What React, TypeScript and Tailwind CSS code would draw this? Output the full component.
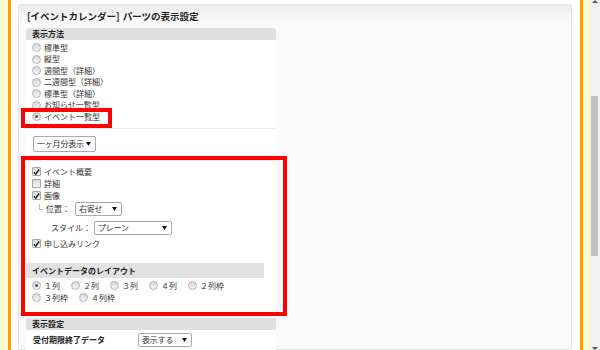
import React from 'react';

const Radio: React.FC<{ checked?: boolean }> = ({ checked }) => (
  <span className="flex h-[9px] w-[9px] shrink-0 items-center justify-center rounded-full border border-[#b2b2b2] bg-[linear-gradient(#d6d6d6,#f6f6f6)]">
    {checked && <span className="h-[3px] w-[3px] rounded-full bg-[#555]" />}
  </span>
);

const Check: React.FC<{ checked?: boolean }> = ({ checked }) => (
  <span className="flex h-[9px] w-[9px] shrink-0 items-center justify-center rounded-[1px] border border-[#a5a5a5] bg-[linear-gradient(#d8d8d8,#f6f6f6)]">
    {checked && (
      <svg width="8" height="8" viewBox="0 0 8 8">
        <path d="M1 4.2 L3.2 6.4 L7 1.2" fill="none" stroke="#222" strokeWidth="1.7" />
      </svg>
    )}
  </span>
);

const Select: React.FC<{ label: string; width: string; height?: string }> = ({ label, width, height = 'h-[14px]' }) => (
  <div className={`flex ${width} ${height} items-center justify-between rounded-[2px] border border-[#aaa] bg-white pl-[3px] pr-[4px]`}>
    <span className="tracking-[-0.2px]">{label}</span>
    <svg width="5" height="4" viewBox="0 0 5 4" className="shrink-0">
      <path d="M0 0 H5 L2.5 4 Z" fill="#111" />
    </svg>
  </div>
);

const RadioRow: React.FC<{ label: string; checked?: boolean }> = ({ label, checked }) => (
  <div className="flex h-[11.5px] items-center gap-[3px]">
    <Radio checked={checked} />
    <span>{label}</span>
  </div>
);

const CheckRow: React.FC<{ label: string; checked?: boolean }> = ({ label, checked }) => (
  <div className="flex h-[12px] items-center gap-[3px]">
    <Check checked={checked} />
    <span>{label}</span>
  </div>
);

const LayoutOption: React.FC<{ label: string; checked?: boolean }> = ({ label, checked }) => (
  <div className="mr-[11px] flex items-center gap-[3px]">
    <Radio checked={checked} />
    <span>{label}</span>
  </div>
);

const displayTypes = ['標準型', '縦型', '週間型（詳細）', '二週間型（詳細）', '標準型（詳細）', 'お知らせ一覧型', 'イベント一覧型'];

const App: React.FC = () => {
  return (
    <div className="relative flex h-[350px] w-[600px] overflow-hidden bg-white font-['Noto_Sans_CJK_JP',sans-serif] text-[8px] text-[#333]">
      <div className="w-[8px] bg-[#fffbd0]" />
      <div className="w-[3px] bg-[#ff9a00]" />

      <div className="flex-1 pl-[7px] pr-[8px] pt-[4px]">
        <div className="h-full rounded-t-[3px] border border-[#e4e4e4] bg-[linear-gradient(#ebebeb,#fafafa_16px)] pl-[7px]">
          <h1 className="flex h-[23px] items-center gap-[3px] pl-[1px] text-[9.5px] font-bold text-[#222]">
            <span>[イベントカレンダー]</span>
            <span>パーツの表示設定</span>
          </h1>

          <div className="w-[250px] bg-white">
            <div className="h-[12px] rounded-t-[3px] bg-[#e0e0e0] px-[6px] font-bold leading-[12px] text-[#222]">表示方法</div>

            <div className="border-b border-[#ececec] px-[6px] pb-[5px] pt-[2px]">
              {displayTypes.map((t) => (
                <RadioRow key={t} label={t} checked={t === 'イベント一覧型'} />
              ))}
            </div>

            <div className="border-b border-[#ececec] px-[7px] pb-[8px] pt-[7px]">
              <Select label="一ヶ月分表示" width="w-[63px]" height="h-[16px]" />
            </div>

            <div className="px-[6px] pt-[5px]">
              <CheckRow label="イベント概要" checked />
              <CheckRow label="詳細" />
              <CheckRow label="画像" checked />
              <div className="flex h-[14px] items-center">
                <span className="mb-[4px] ml-[7px] mr-[3px] h-[6px] w-[4px] border-b border-l border-[#bbb]" />
                <span className="mr-[5px]">位置：</span>
                <Select label="右寄せ" width="w-[47px]" />
              </div>
              <div className="mt-[5px] flex h-[14px] items-center">
                <span className="ml-[19px] mr-[3px]">スタイル：</span>
                <Select label="プレーン" width="w-[78px]" />
              </div>
              <div className="mt-[3px]">
                <CheckRow label="申し込みリンク" checked />
              </div>
            </div>

            <div className="mt-[13px] h-[15px] w-[238px] bg-[#e2e2e2] px-[6px] font-bold leading-[15px] text-[#222]">
              イベントデータのレイアウト
            </div>
            <div className="px-[6px] pb-[14px] pt-[2px]">
              <div className="flex h-[12px] items-center">
                <LayoutOption label="１列" checked />
                <LayoutOption label="２列" />
                <LayoutOption label="３列" />
                <LayoutOption label="４列" />
                <LayoutOption label="２列枠" />
              </div>
              <div className="flex h-[12px] items-center">
                <LayoutOption label="３列枠" />
                <LayoutOption label="４列枠" />
              </div>
            </div>

            <div className="h-[12px] bg-[#e0e0e0] px-[6px] font-bold leading-[12px] text-[#222]">表示設定</div>
            <div className="flex items-center px-[7px] pb-[6px] pt-[3px]">
              <span className="w-[105px] font-bold text-[#222]">受付期限終了データ</span>
              <Select label="表示する" width="w-[54px]" />
            </div>
          </div>
        </div>
      </div>

      <div className="w-[3px] bg-[#ff9a00]" />
      <div className="w-[7px] bg-[#fffbd0]" />
      <div className="relative w-[10px] bg-[#f1f1f1]">
        <svg className="absolute left-[2px] top-[0px]" width="6" height="3" viewBox="0 0 6 3">
          <path d="M0 3 L3 0 L6 3 Z" fill="#555" />
        </svg>
        <div className="absolute left-[1px] top-[96px] h-[160px] w-[7px] bg-[#c1c1c1]" />
        <svg className="absolute bottom-[0px] left-[2px]" width="6" height="3" viewBox="0 0 6 3">
          <path d="M0 0 L6 0 L3 3 Z" fill="#555" />
        </svg>
      </div>

      <div className="absolute left-[21px] top-[108px] h-[20px] w-[91px] border-[4px] border-[#ff0000]" />
      <div className="absolute left-[21px] top-[156px] h-[160px] w-[266px] border-[4px] border-[#ff0000]" />
    </div>
  );
};

export default App;
